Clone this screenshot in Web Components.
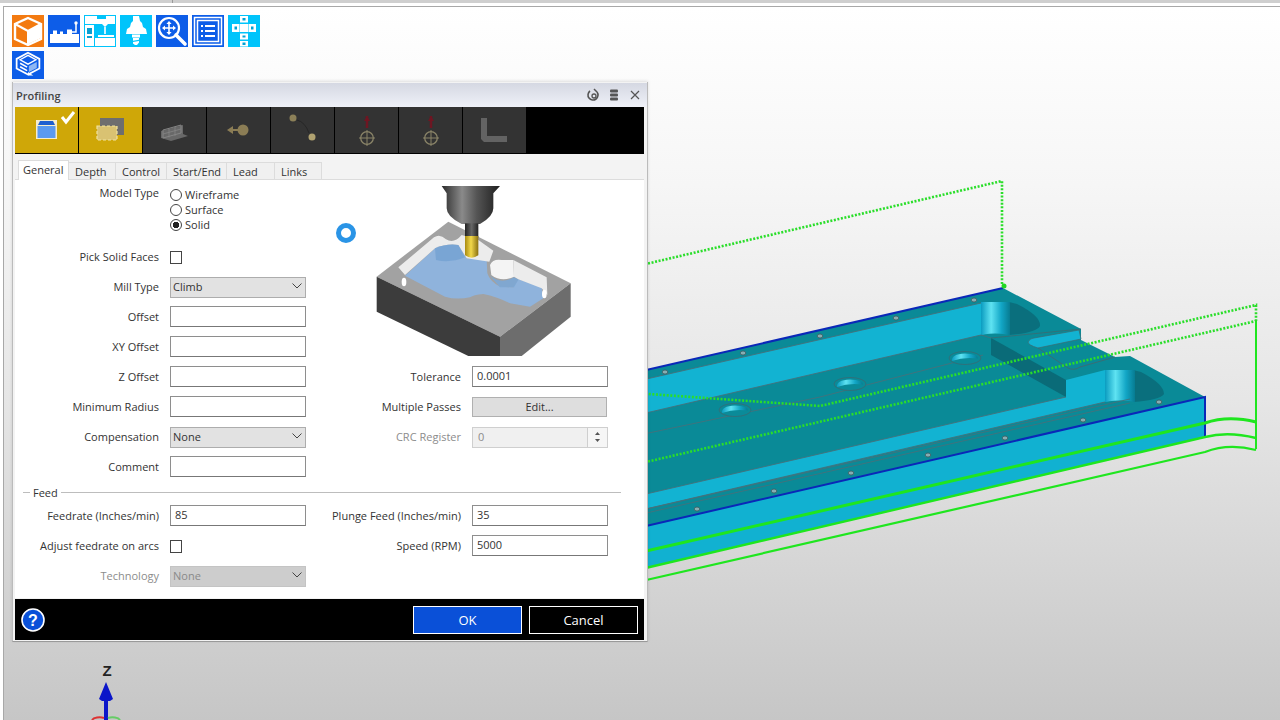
<!DOCTYPE html>
<html lang="en"><head><meta charset="utf-8"><title>Profiling</title>
<style>html,body{margin:0;padding:0;width:1280px;height:720px;overflow:hidden;background:#fff}</style></head>
<body>
<cam-app>
  <cam-toolbar>
    <tool-btn color="#f37a10" icon="cube"></tool-btn>
    <tool-btn color="#0d5de8" icon="machine"></tool-btn>
    <tool-btn color="#00c4fb" icon="cnc"></tool-btn>
    <tool-btn color="#00c4fb" icon="tool"></tool-btn>
    <tool-btn color="#0d5de8" icon="zoom"></tool-btn>
    <tool-btn color="#0d5de8" icon="list"></tool-btn>
    <tool-btn color="#00c4fb" icon="tiles"></tool-btn>
    <tool-btn color="#0d5de8" icon="stock" short></tool-btn>
  </cam-toolbar>
  <cam-dialog slot="window" heading="Profiling">
    <op-strip slot="strip">
      <op-btn on icon="a" check></op-btn><op-btn on icon="b"></op-btn>
      <op-btn icon="c"></op-btn><op-btn icon="d"></op-btn><op-btn icon="e"></op-btn>
      <op-btn icon="f"></op-btn><op-btn icon="f"></op-btn><op-btn icon="g"></op-btn>
    </op-strip>
    <tab-bar slot="tabs">
      <tab-item w="51" active>General</tab-item><tab-item w="47">Depth</tab-item><tab-item w="51">Control</tab-item><tab-item w="60">Start/End</tab-item><tab-item w="48">Lead</tab-item><tab-item w="47">Links</tab-item>
    </tab-bar>
    <cam-form>
      <form-col slot="left">
        <cam-field label="Model Type" h="61" top>
          <radio-opt>Wireframe</radio-opt><radio-opt>Surface</radio-opt><radio-opt checked>Solid</radio-opt>
        </cam-field>
        <cam-field label="Pick Solid Faces" h="29"><check-box></check-box></cam-field>
        <cam-field label="Mill Type"><select-box>Climb</select-box></cam-field>
        <cam-field label="Offset"><text-box></text-box></cam-field>
        <cam-field label="XY Offset"><text-box></text-box></cam-field>
        <cam-field label="Z Offset"><text-box></text-box></cam-field>
        <cam-field label="Minimum Radius"><text-box></text-box></cam-field>
        <cam-field label="Compensation"><select-box>None</select-box></cam-field>
        <cam-field label="Comment"><text-box></text-box></cam-field>
      </form-col>
      <form-col slot="right" wide>
        <tool-picture></tool-picture>
        <cam-field wide label="Tolerance"><text-box>0.0001</text-box></cam-field>
        <cam-field wide label="Multiple Passes"><push-box>Edit...</push-box></cam-field>
        <cam-field wide label="CRC Register" disabled><spin-box>0</spin-box></cam-field>
      </form-col>
      <group-rule slot="rule">Feed</group-rule>
      <form-col slot="left2">
        <cam-field label="Feedrate (Inches/min)"><text-box>85</text-box></cam-field>
        <cam-field label="Adjust feedrate on arcs"><check-box></check-box></cam-field>
        <cam-field label="Technology" disabled><select-box disabled>None</select-box></cam-field>
      </form-col>
      <form-col slot="right2" wide>
        <cam-field wide label="Plunge Feed (Inches/min)"><text-box>35</text-box></cam-field>
        <cam-field wide label="Speed (RPM)"><text-box>5000</text-box></cam-field>
      </form-col>
    </cam-form>
    <dialog-foot slot="foot"></dialog-foot>
    <busy-ring slot="over"></busy-ring>
  </cam-dialog>
</cam-app>
<script>
const FONT='"Open Sans","Noto Sans","Liberation Sans",sans-serif';
function def(name,css,html,extra){
  const cls=class extends HTMLElement{
    constructor(){super();const r=this.attachShadow({mode:'open'});
      r.innerHTML='<style>'+css+'</style>'+(typeof html==='function'?html(this):html);}
    connectedCallback(){ if(extra) extra(this); }
  };
  customElements.define(name,cls);
}
const TOOL={
cube:`<path d="M16 3 29 9v15L16 30 3 24V9z" fill="none" stroke="#fff" stroke-width="2.4"/><path d="M16 16 28 10v13.5L16 29z" fill="#fff"/><path d="M4 9.5 16 16 28 9.5" fill="none" stroke="#fff" stroke-width="2"/><path d="M16 16v13" stroke="#fff" stroke-width="2"/>`,
machine:`<rect x="2" y="19" width="29" height="9" fill="#fff"/><rect x="5" y="15.500" width="4" height="3.500" fill="#fff"/><rect x="12" y="16.500" width="3" height="2.500" fill="#fff"/><rect x="19" y="14.500" width="5" height="4.500" fill="#fff"/><path d="M24 17h4V9" fill="none" stroke="#fff" stroke-width="1.500"/><circle cx="28" cy="8" r="1.700" fill="#fff"/>`,
cnc:`<path d="M1 1h12v8H1zM1 10h9v21H1z" fill="#fff"/><rect x="3" y="13" width="5" height="6" fill="#0a9fd0"/><rect x="3" y="21" width="5" height="2" fill="#0a9fd0"/><path d="M13 4h9V1h9v8h-7l-3 3-3-3h-5z" fill="#fff"/><path d="M21 12v7" stroke="#fff" stroke-width="1.600"/><path d="M11 23h20v8H11z" fill="#fff"/><path d="M14 20h16v2H14z" fill="#fff"/>`,
tool:`<path d="M13 1h6l1 5 2 2 1 4 3 2 1 5H6l1-5 3-2 1-4 2-2z" fill="#fff"/><rect x="12" y="19.500" width="8" height="3" fill="#fff"/><path d="M13 23h6v1.800l-6 1zM13 27l6-1v1.600l-2 2.400h-2l-2-1.500z" fill="#fff"/>`,
zoom:`<circle cx="13" cy="13" r="10" fill="none" stroke="#fff" stroke-width="2.200"/><path d="M20 20l9 9" stroke="#fff" stroke-width="3.600" stroke-linecap="round"/><path d="M13 6l2.600 3h-1.800v3.200H17V10.400l3 2.600-3 2.600v-1.800h-3.200V17h1.800L13 20l-2.600-3h1.800v-3.200H9v1.800L6 13l3-2.600v1.800h3.200V9h-1.800z" fill="#fff"/>`,
list:`<rect x="2.500" y="2.500" width="27" height="27" fill="none" stroke="#fff" stroke-width="1.500"/><rect x="5.500" y="5.500" width="21" height="21" fill="none" stroke="#fff" stroke-width="1.500"/><g fill="#fff"><rect x="9" y="10" width="2" height="2"/><rect x="9" y="15" width="2" height="2"/><rect x="9" y="20" width="2" height="2"/><rect x="13" y="10" width="10" height="2"/><rect x="13" y="15" width="10" height="2"/><rect x="13" y="20" width="10" height="2"/></g>`,
tiles:`<g fill="#fff"><rect x="12" y="1" width="8" height="6.500"/><rect x="4" y="9" width="7.500" height="8"/><rect x="12" y="9" width="8" height="8"/><rect x="20.500" y="9" width="7.500" height="8"/><rect x="12" y="18.500" width="8" height="6"/><rect x="12" y="26" width="8" height="5.500"/></g><g fill="#00a3d6"><rect x="14.500" y="3" width="3" height="2.500"/><rect x="6.500" y="11.500" width="2.500" height="3"/><rect x="23" y="11.500" width="2.500" height="3"/><rect x="14.500" y="20.500" width="3" height="2"/><rect x="14.500" y="27.500" width="3" height="2.500"/></g>`,
stock:`<path d="M16 2 29 9v11L16 27 3 20V9z" fill="none" stroke="#fff" stroke-width="2"/><path d="M7 10l9-5 9 5-9 5z" fill="none" stroke="#fff" stroke-width="1.600"/><path d="M7 14l8 4.500M7 18l8 4.500" stroke="#fff" stroke-width="1.800"/><path d="M17 17l9-4.500v7L17 24z" fill="#8fb8f4"/><path d="M16 24l6 4-6 0z" fill="#fff"/>`
};
def('cam-app',`:host{display:flex;flex-direction:column;width:1280px;height:720px;background:#fff;font-family:${FONT};overflow:hidden}
.strip{height:3px;flex:none;background:linear-gradient(90deg,#cfcfcf 172px,#999 172px,#999 173px,#cfcfcf 173px)}
.pad{height:3px;flex:none}
cam-viewport{flex:1;margin-left:3px}`,
`<div class="strip"></div><div class="pad"></div><cam-viewport><slot></slot><slot name="window" slot="window"></slot></cam-viewport>`);

const screws=[[665,372],[743,353],[820,336],[896,318],[974,300],[697,509],[774,491],[851,473],[928,455],[1005,438],[1083,420],[1159,402]];
const hole=(x,y)=>`<ellipse cx="${x}" cy="${y}" rx="16" ry="6.500" fill="#0a8b99" stroke="#3a6a72" stroke-width=".8"/><path d="M${x-13} ${y+3}q-1-7 13-7.500q13 .5 13 5q-14-2-26 2.500z" fill="url(#cyl)"/>`;
def('cam-viewport',`:host{display:grid;position:relative;border-top:1px solid #a8a8a8;border-left:1px solid #a8a8a8;background:linear-gradient(180deg,#fff 0,#f6f6f6 25%,#e6e6e6 55%,#c6c6c6 100%)}
svg{grid-area:1/1;width:1276px;height:713px;display:block}
.layer{grid-area:1/1;min-width:0}
.z{font:700 15px "Liberation Sans",sans-serif;fill:#222}`,
`<svg viewBox="4 7 1276 713" aria-hidden="true">
<defs>
<linearGradient id="cyl" x1="0" x2="1" y1="0" y2="0"><stop offset="0" stop-color="#0a9cc0"/><stop offset=".35" stop-color="#5fe3f2"/><stop offset=".7" stop-color="#12a6c6"/><stop offset="1" stop-color="#077c92"/></linearGradient>
</defs>
<polygon points="620,532 1205,397 1205,437 620,574" fill="#11b1d1"/>
<polygon points="620,376 1003,288 1081,329 1081,340 1115,357 1130,356 1205,397 620,532" fill="#0a8a97"/>
<polygon points="620,385 981,303 981,335 620,419" fill="#12b3d2"/>
<path d="M981 302h28l8 2q24 12 23 22 -4 7 -31 9h-28z" fill="#0a6f7d"/>
<rect x="981" y="302" width="29" height="33" fill="url(#cyl)"/>
<ellipse cx="995" cy="336" rx="14" ry="2.500" fill="#0a8a97"/>
<polygon points="1066,380 1105,370 1105,402 620,515 620,500 1066,397" fill="#12b3d2"/>
<path d="M1105 370h28l8 2q23 12 23 22 -4 6 -31 8h-28z" fill="#0a6f7d"/>
<rect x="1105" y="370" width="30" height="32" fill="url(#cyl)"/>
<ellipse cx="1120" cy="403" rx="15" ry="2.500" fill="#0a8a97"/>
<polygon points="991,338 1066,380 1066,397 991,355" fill="#0a6b78"/>
<path d="M991 338 1081 329" stroke="#3e6a70" stroke-width=".8" fill="none"/>
<path d="M1028 342q2-4 6-4l45-8 2 9-43 9q-10-3-10-6z" fill="#12b3d2" stroke="#3e6a70" stroke-width=".7"/>
<path d="M1038 348l30 20q6 3 12-1l35-10" fill="none" stroke="#3e6a70" stroke-width=".9"/>
<g fill="none" stroke="#46707a" stroke-width=".9">
<path d="M620 385 981 303"/><path d="M620 419 981 335"/><path d="M620 439 820 397 983 355"/><path d="M620 500 1066 397"/><path d="M620 515 1105 402"/><path d="M620 519 1130 403"/><path d="M620 515 1130 399"/><path d="M981 335l10 3"/>
</g>
${hole(735,410)}${hole(850,384)}${hole(965,358)}
<g fill="#86adb2" stroke="#3b5a60" stroke-width=".8">${screws.map(p=>`<ellipse cx="${p[0]}" cy="${p[1]}" rx="2.800" ry="2"/>`).join('')}</g>
<path d="M620 376 1003 288" stroke="#0a28b8" stroke-width="2" fill="none"/>
<path d="M620 532 1205 397V437" stroke="#0a28b8" stroke-width="2" fill="none"/>
<path d="M620 574 1205 437" stroke="#6f8f8f" stroke-width="1" fill="none"/>
<g fill="none" stroke="#2ade2a" stroke-width="2.600" stroke-dasharray="2 1.600">
<path d="M620 270 1002 181V285"/>
<path d="M620 392 820 406 1256 305V321"/>
<path d="M620 468 1256 321"/>
</g>
<circle cx="1004" cy="286" r="2.500" fill="#22d622"/>
<g fill="none" stroke="#1fe61f" stroke-linejoin="round">
<path d="M1256 321V449" stroke-width="2"/>
<path d="M620 557 1205 423Q1228 415 1256 422" stroke-width="3"/>
<path d="M620 574 1205 437Q1228 431 1256 438" stroke-width="2.400"/>
<path d="M620 586 1205 452Q1228 443 1256 450" stroke-width="2.200"/>
</g>
<text class="z" x="107" y="676" text-anchor="middle">Z</text>
<path d="M106 682l7 17-3 2h-2v20h-4v-20h-2l-3-2z" fill="#0b16c9"/>
<path d="M92 720a8 4 0 0 1 12-2" fill="none" stroke="#d33" stroke-width="2"/><path d="M108 718a8 4 0 0 1 12 2" fill="none" stroke="#6c6" stroke-width="2"/>
</svg>
<div class="layer"><slot></slot></div><slot name="window"></slot>`);

def('cam-toolbar',`:host{display:flex;flex-wrap:wrap;gap:4px;width:260px;padding:8px 0 0 8px}`,`<slot></slot>`);
def('tool-btn',`:host{display:block;width:32px;height:32px;overflow:hidden}:host([short]){height:28px}svg{display:block;width:32px;height:32px}:host([short]) svg{height:28px}`,`<svg viewBox="0 0 32 32"></svg>`,el=>{
  const s=el.shadowRoot.querySelector('svg');s.style.background=el.getAttribute('color');s.innerHTML=TOOL[el.getAttribute('icon')];
});

def('cam-dialog',`:host{position:absolute;left:8px;top:75px;width:636px;height:560px;box-sizing:border-box;display:flex;flex-direction:column;background:#f3f3f3;box-shadow:0 -1px 3px rgba(0,0,0,.12);border-bottom:1px solid #999;border-right:1px solid #bbb;border-left:1px solid #bbb;font-family:${FONT};font-size:11px;font-weight:500;color:#333}
.title{height:24px;flex:none;display:flex;align-items:center;background:linear-gradient(180deg,#d5d8e2,#eff1f8);padding:0 4px 0 3px;margin-top:1px;color:#444;font-weight:600;font-size:11px}
.title span{flex:1}
.title svg{display:block;margin-left:5px}
.inner{flex:1;display:flex;flex-direction:column;padding:0 3px 2px 2px;min-height:0;position:relative}
.body{height:418px;background:#fff;box-sizing:border-box;flex:none}
.gap{height:8px;flex:none}`,
el=>`<div class="title"><span>${el.getAttribute('heading')}</span>
<svg width="16" height="16" viewBox="0 0 16 16"><path d="M5 4a5 5 0 1 0 7 1" fill="none" stroke="#555" stroke-width="1.600"/><circle cx="9" cy="9" r="2" fill="none" stroke="#555" stroke-width="1.300"/><path d="M9 2l3 3" stroke="#555" stroke-width="1.500"/></svg>
<svg width="16" height="16" viewBox="0 0 16 16"><g fill="#555"><rect x="4" y="2.500" width="8" height="3" rx="1"/><rect x="4" y="6.500" width="8" height="3" rx="1"/><rect x="4" y="10.500" width="8" height="3" rx="1"/></g></svg>
<svg width="16" height="16" viewBox="0 0 16 16"><path d="M4 4l8 8M12 4l-8 8" stroke="#555" stroke-width="1.200"/></svg></div>
<div class="inner"><slot name="strip"></slot><div class="gap"></div><slot name="tabs"></slot><div class="body"><slot></slot></div><slot name="foot"></slot><slot name="over"></slot></div>`);

const OP={
a:`<rect x="21" y="13" width="21" height="19" fill="#fff" opacity=".8"/><rect x="22.500" y="19" width="18" height="12" fill="#5b9af0"/><path d="M23 18l2-4h13l2 4z" fill="#1f5fd0"/>`,
b:`<rect x="21" y="11" width="24" height="17" fill="#6e6e6e"/><rect x="18" y="19" width="20" height="14" fill="#d9c272" stroke="#f2e39f" stroke-width="1.200" stroke-dasharray="3 2"/>`,
c:`<path d="M18 24l22-6v9l5 2-17 5-10-3z" fill="#686868"/><path d="M20 23l18-5v8l-18 5z" fill="none" stroke="#858585" stroke-width="1"/><path d="M26 21.500v9M32 20v9M20 27l18-5" stroke="#858585" stroke-width=".8"/>`,
d:`<circle cx="36" cy="23" r="5.500" fill="#8b7d55"/><path d="M20 23l6-4v3h6v2h-6v3z" fill="#8b7d55"/>`,
e:`<circle cx="22" cy="11" r="3.500" fill="#8c8058"/><circle cx="41" cy="30" r="3.500" fill="#b0a270"/><path d="M26 13q8 2 12 13" fill="none" stroke="#262626" stroke-width="1"/>`,
f:`<path d="M32 9v12" stroke="#6e1622" stroke-width="2.500"/><path d="M29 14l3-5 3 5z" fill="#6e1622"/><circle cx="32" cy="31" r="6.300" fill="none" stroke="#8a8468" stroke-width="1.300"/><path d="M24 31h16M32 23v16" stroke="#8a8468" stroke-width="1"/>`,
g:`<path d="M18 11h6v18h20v6H21l-3-3z" fill="#636363"/>`};
def('op-strip',`:host{display:flex;height:47px;background:#000;flex:none;gap:1px;box-sizing:border-box;padding-bottom:1px}`,`<slot></slot>`);
def('op-btn',`:host{display:block;width:63px;height:46px;background:#333}:host([on]){background:#cfa708}svg{display:block;width:63px;height:46px}`,`<svg viewBox="0 0 63 46"></svg>`,el=>{
  let h=OP[el.getAttribute('icon')];
  if(el.hasAttribute('check')) h+=`<path d="M47 10l4 5 8-10" fill="none" stroke="#fff" stroke-width="3"/>`;
  el.shadowRoot.querySelector('svg').innerHTML=h;
});

def('tab-bar',`:host{display:flex;height:18px;flex:none;align-items:flex-end;padding-left:3px;box-shadow:inset 0 -1px 0 #dcdcdc}`,`<slot></slot>`);
def('tab-item',`:host{display:flex;align-items:center;box-sizing:border-box;height:18px;padding-left:6px;border:1px solid #dcdcdc;border-left:0;background:#f0f0f0;color:#333;white-space:nowrap}
:host([active]){height:20px;background:#fff;padding-left:4px;border-left:1px solid #dcdcdc;border-bottom:0;margin-top:-2px;padding-bottom:2px}`,`<slot></slot>`,el=>{el.style.width=el.getAttribute('w')+'px'});

def('cam-form',`:host{display:grid;grid-template-columns:291px 302px;grid-template-rows:auto auto auto;padding-top:2px;box-sizing:border-box}
.rule{grid-column:1/3}`,
`<slot name="left"></slot><slot name="right"></slot><div class="rule"><slot name="rule"></slot></div><slot name="left2"></slot><slot name="right2"></slot>`);
def('form-col',`:host{display:flex;flex-direction:column}`,`<slot></slot>`);
def('cam-field',`:host{display:flex;align-items:center;height:30px;gap:11px;flex:none}
:host([top]){align-items:flex-start}
.l{width:144px;flex:none;text-align:right;white-space:nowrap;color:#333;padding-bottom:2px}
:host([wide]) .l{width:155px}
:host([disabled]) .l{color:#8c8c8c}
:host([top]) .l{padding:3px 0 0}
.c{width:136px;flex:none;display:flex;flex-direction:column}
:host([top]) .c{padding-top:5px}`,
el=>`<div class="l">${el.getAttribute('label')}</div><div class="c"><slot></slot></div>`,
el=>{if(el.getAttribute('h'))el.style.height=el.getAttribute('h')+'px'});
def('radio-opt',`:host{display:flex;align-items:center;height:15px;gap:3px;color:#333}
i{display:block;width:10px;height:10px;border:1px solid #444;border-radius:50%;background:#fff;position:relative;flex:none}
span{display:block;margin-top:-1px}
:host([checked]) i{background:radial-gradient(circle,#222 0,#222 3px,#fff 3.500px)}`,`<i></i><span><slot></slot></span>`);
def('check-box',`:host{display:block;width:10px;height:11px;border:1px solid #444;background:#fff}`,``);
def('text-box',`:host{display:flex;align-items:center;box-sizing:border-box;height:21px;border:1px solid #8e8e8e;border-bottom-color:#777;background:#fff;padding:0 4px 2px;color:#333;margin-top:-1px}`,`<slot></slot>`);
def('select-box',`:host{display:flex;align-items:center;justify-content:space-between;box-sizing:border-box;height:21px;border:1px solid #adadad;background:#e2e2e2;padding:0 3px 2px 2px;color:#333}
:host([disabled]){background:#cdcdcd;color:#8a8a8a;border-color:#c4c4c4}
svg{display:block}`,`<slot></slot><svg width="10" height="6" viewBox="0 0 10 6"><path d="M.5.500 5 5 9.500.500" fill="none" stroke="#444" stroke-width="1"/></svg>`);
def('push-box',`:host{display:flex;align-items:center;justify-content:center;box-sizing:border-box;height:20px;width:135px;border:1px solid #b0b0b0;background:#dedede;color:#333;padding-bottom:2px}`,`<slot></slot>`);
def('spin-box',`:host{display:flex;align-items:stretch;box-sizing:border-box;height:21px;border:1px solid #cfcfcf;background:#f0f0f0;color:#8c8c8c}
.v{flex:1;display:flex;align-items:center;padding:0 0 2px 5px}
.s{width:19px;background:#f6f6f6;border-left:1px solid #cfcfcf;display:flex;flex-direction:column;justify-content:center;gap:4px;align-items:center}
.s svg{display:block}`,`<div class="v"><slot></slot></div><div class="s"><svg width="5" height="3" viewBox="0 0 7 4"><path d="M3.500 0 7 4H0z" fill="#555"/></svg><svg width="5" height="3" viewBox="0 0 7 4"><path d="M3.500 4 7 0H0z" fill="#555"/></svg></div>`);
def('group-rule',`:host{display:flex;align-items:center;height:19px;padding:2px 0 0 8px;width:606px;box-sizing:border-box;gap:3px;color:#333}
i{display:block;height:1px;background:#bdbdbd}i.a{width:7px}i.b{flex:1}`,`<i class="a"></i><slot></slot><i class="b"></i>`);

def('tool-picture',`:host{display:block;height:180px;margin-left:24px}svg{display:block;width:260px;height:180px}`,
`<svg viewBox="0 6 780 540" aria-hidden="true">
<defs><linearGradient id="h" x1="0" x2="1" y1="0" y2="0"><stop offset="0" stop-color="#2a2a2a"/><stop offset=".35" stop-color="#8a8a8a"/><stop offset=".6" stop-color="#555"/><stop offset="1" stop-color="#1e1e1e"/></linearGradient>
<linearGradient id="g" x1="0" x2="1" y1="0" y2="0"><stop offset="0" stop-color="#a88a10"/><stop offset=".45" stop-color="#f2d84a"/><stop offset="1" stop-color="#8a7010"/></linearGradient>
<linearGradient id="s" x1="0" x2="1"><stop offset="0" stop-color="#222"/><stop offset=".5" stop-color="#666"/><stop offset="1" stop-color="#222"/></linearGradient></defs>
<polygon points="140,290 355,125 722,310 510,470" fill="#a2a2a2"/>
<polygon points="140,290 510,470 510,528 415,528 140,395" fill="#3c3c3c"/>
<polygon points="510,470 722,310 722,410 575,528 510,528" fill="#6d6d6d"/>
<path d="M225 287 315 205Q350 190 385 195L410 235 470 240 472 280Q480 305 510 320L550 322 565 298 635 322 640 355 600 380 540 370Q500 350 460 342 430 345 420 352 380 360 345 350Z" fill="#8fb3dc"/>
<path d="M205 262 312 172Q330 160 348 178 372 192 395 165L445 180 490 212 478 245 410 235 385 195Q350 190 315 205L225 285Z" fill="#ececec"/>
<path d="M315 205Q350 190 385 195L405 232Q360 250 318 240Z" fill="#72a0d2" opacity=".75"/>
<path d="M478 285Q510 315 552 292L566 298 552 322 510 322Z" fill="#7aa8d8" opacity=".85"/>
<path d="M480 255Q488 236 515 240L550 240 552 290Q515 308 484 285Z" fill="#f4f4f4"/>
<path d="M550 240 650 292 652 345 635 325 565 298 552 290Z" fill="#ececec"/>
<ellipse cx="222" cy="306" rx="7" ry="13" fill="#fff"/><ellipse cx="643" cy="342" rx="7" ry="13" fill="#fff"/>
<path d="M335 18h175l-20 22v45q0 25-40 47h-55q-45-22-45-47V40z" fill="url(#h)"/>
<rect x="405" y="130" width="40" height="42" fill="url(#s)"/>
<path d="M405 168h40v58q-20 14-40 0z" fill="url(#g)"/>
</svg>`);

def('dialog-foot',`:host{display:flex;align-items:center;height:41px;margin-top:1px;background:#000;padding:0 6px 0 5px;box-sizing:border-box;flex:none;gap:7px}
svg{display:block;margin-right:auto}
b{display:flex;align-items:center;justify-content:center;width:109px;height:28px;box-sizing:border-box;border:1px solid #fff;color:#fff;font-weight:400;font-size:13px}
.ok{background:#0a50d8}`,
`<svg width="26" height="26" viewBox="0 0 26 26"><circle cx="13" cy="13" r="11" fill="#0a50d8" stroke="#fff" stroke-width="1.600"/><text x="13" y="19" text-anchor="middle" font-family="Liberation Sans,sans-serif" font-weight="700" font-size="16" fill="#fff">?</text></svg><b class="ok">OK</b><b>Cancel</b>`);
def('busy-ring',`:host{position:absolute;left:323px;top:116px;width:20px;height:20px;box-sizing:border-box;border:5px solid #2a94e6;border-radius:50%;background:#fff}`,``);
</script>
</body></html>
